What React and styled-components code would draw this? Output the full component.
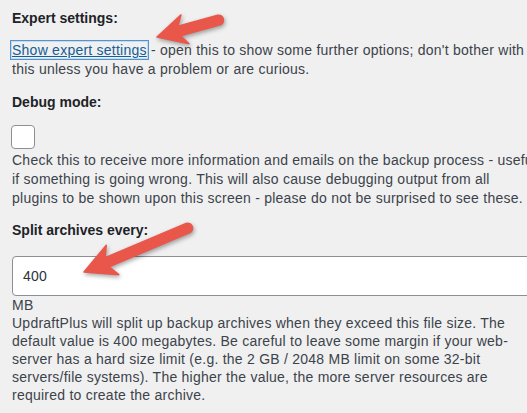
import React from "react";
import styled, { createGlobalStyle } from "styled-components";

const Global = createGlobalStyle`
  html, body { margin: 0; padding: 0; background: #f0f0f1; overflow: hidden; }
  body { font-family: "Liberation Sans", Arial, sans-serif; }
`;

const Page = styled.div`
  position: relative;
  width: 527px;
  height: 413px;
  overflow: hidden;
  box-sizing: border-box;
  padding: 9px 0 0 12px;
  color: #3c434a;
  font-size: 14px;
`;

const Section = styled.section`
  display: flex;
  flex-direction: column;
  align-items: flex-start;
  margin-bottom: ${(p) => p.$gap || 13}px;
`;

const Heading = styled.h3`
  margin: 0 0 ${(p) => p.$after || 13}px;
  font-size: 14px;
  line-height: 19px;
  font-weight: 700;
  color: #1d2327;
`;

const Desc = styled.div`
  line-height: ${(p) => p.$lh || 19}px;
  letter-spacing: 0.24px;
`;

const Line = styled.span`
  display: block;
  white-space: nowrap;
`;

const FocusLink = styled.a`
  color: #135e96;
  text-decoration: underline;
  outline: 1px solid #4f94d4;
  outline-offset: 1px;
  box-shadow: 0 0 0 1px rgba(79, 148, 212, 0.25);
  cursor: pointer;
`;

const Checkbox = styled.span`
  display: block;
  box-sizing: border-box;
  width: 24px;
  height: 24px;
  border: 1px solid #8c8f94;
  border-radius: 4px;
  background: #fff;
  margin: 0 0 2px -1px;
`;

const TextInput = styled.div`
  box-sizing: border-box;
  width: 530px;
  height: 40px;
  border: 1px solid #8c8f94;
  border-radius: 4px;
  background: #fff;
  padding: 0 10px;
  display: flex;
  align-items: center;
  color: #2c3338;
  font-size: 14px;
  letter-spacing: 0.24px;
`;

const Unit = styled.div`
  line-height: 18px;
  letter-spacing: 0.24px;
`;

const Overlay = styled.svg`
  position: absolute;
  left: 0;
  top: 0;
  width: 527px;
  height: 413px;
  pointer-events: none;
  filter: drop-shadow(1px 2px 2px rgba(0, 0, 0, 0.35));
`;

function arrowPath(tip, tail, headLen, headHalf, shaft) {
  const dx = tail[0] - tip[0];
  const dy = tail[1] - tip[1];
  const L = Math.hypot(dx, dy);
  const u = [dx / L, dy / L];
  const n = [-u[1], u[0]];
  const p = (d, w) => [tip[0] + u[0] * d + n[0] * w, tip[1] + u[1] * d + n[1] * w];
  const s = shaft / 2;
  const f = (q) => `${q[0].toFixed(1)} ${q[1].toFixed(1)}`;
  return [
    `M ${f(p(0, 0))}`,
    `L ${f(p(headLen, headHalf))}`,
    `L ${f(p(headLen - 6, s))}`,
    `L ${f(p(L, s))}`,
    `A ${s} ${s} 0 0 0 ${f(p(L, -s))}`,
    `L ${f(p(headLen - 6, -s))}`,
    `L ${f(p(headLen, -headHalf))}`,
    "Z",
  ].join(" ");
}

function Arrows() {
  return (
    <Overlay viewBox="0 0 527 413">
      <path d={arrowPath([157, 37], [219, 20], 29, 15, 10)} fill="#e9574b" strokeLinejoin="round" stroke="#e9574b" strokeWidth="1.5" />
      <path d={arrowPath([84, 272], [188, 228], 31, 16, 10)} fill="#e9574b" strokeLinejoin="round" stroke="#e9574b" strokeWidth="1.5" />
    </Overlay>
  );
}

export default function App() {
  return (
    <Page>
      <Global />
      <Section $gap={14}>
        <Heading>Expert settings:</Heading>
        <Desc>
          <Line>
            <FocusLink>Show expert settings</FocusLink> - open this to show some further options; don't bother with
          </Line>
          <Line>this unless you have a problem or are curious.</Line>
        </Desc>
      </Section>
      <Section $gap={13}>
        <Heading $after={13}>Debug mode:</Heading>
        <Checkbox />
        <Desc>
          <Line>Check this to receive more information and emails on the backup process - useful</Line>
          <Line>if something is going wrong. This will also cause debugging output from all</Line>
          <Line>plugins to be shown upon this screen - please do not be surprised to see these.</Line>
        </Desc>
      </Section>
      <Section>
        <Heading $after={16}>Split archives every:</Heading>
        <TextInput>400</TextInput>
        <Unit>MB</Unit>
        <Desc $lh={18}>
          <Line>UpdraftPlus will split up backup archives when they exceed this file size. The</Line>
          <Line>default value is 400 megabytes. Be careful to leave some margin if your web-</Line>
          <Line>server has a hard size limit (e.g. the 2 GB / 2048 MB limit on some 32-bit</Line>
          <Line>servers/file systems). The higher the value, the more server resources are</Line>
          <Line>required to create the archive.</Line>
        </Desc>
      </Section>
      <Arrows />
    </Page>
  );
}
